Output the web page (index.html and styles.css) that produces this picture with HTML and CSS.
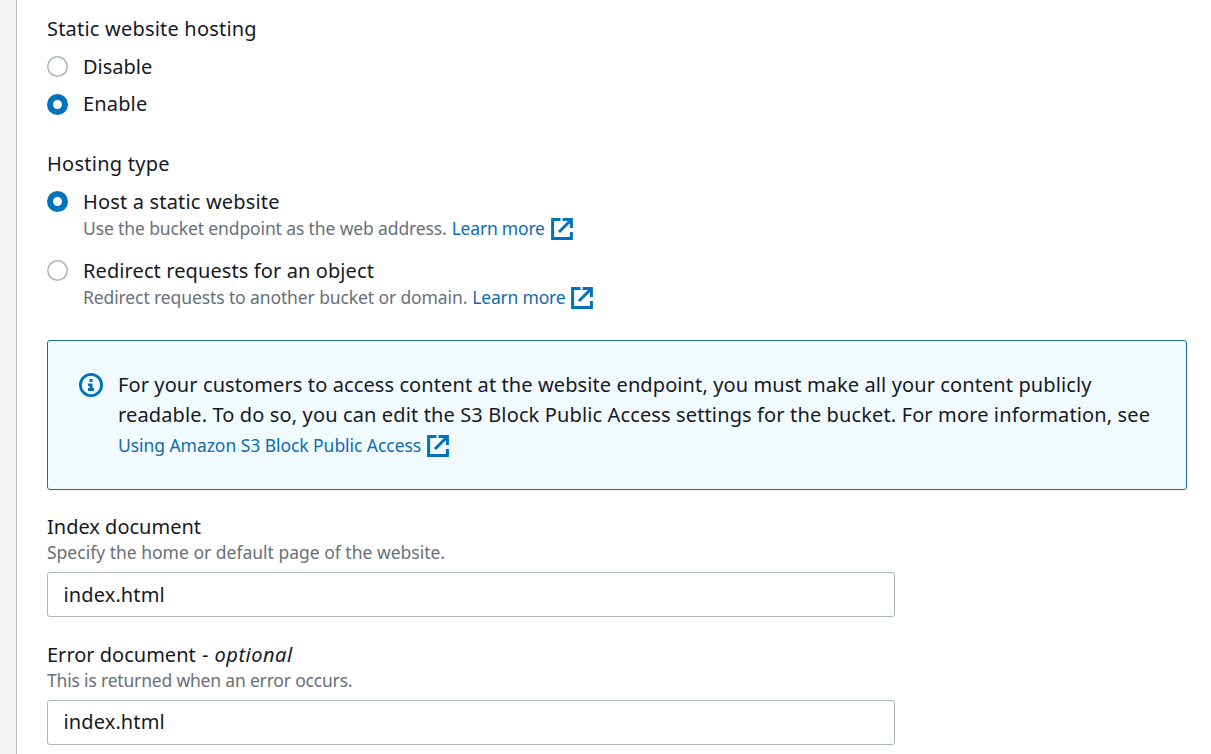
FILE: index.html
```
<!DOCTYPE html>
<html lang="en">
<head>
<meta charset="utf-8">
<title>Static website hosting</title>
<link rel="stylesheet" href="styles.css">
</head>
<body>
<svg class="sprite" width="0" height="0" aria-hidden="true">
  <symbol id="external" viewBox="0 0 22 22">
    <path d="M9.5 1.6H1.6v18.8h18.8V14M11.5 1.6h8.9V10M20 2 8 14" fill="none" stroke="currentColor" stroke-width="3"/>
  </symbol>
</svg>
<main class="panel">
  <section class="group">
    <h2 class="label"><span class="t1">Static website hosting</span></h2>
    <div class="option"><span class="radio raised"></span><span class="t2">Disable</span></div>
    <div class="option enable"><span class="radio checked"></span><span class="t3">Enable</span></div>
  </section>
  <section class="group hosting">
    <h2 class="label"><span class="t4">Hosting type</span></h2>
    <div class="option"><span class="radio checked raised"></span><span class="t5">Host a static website</span></div>
    <p class="hint indented"><span class="t6">Use the bucket endpoint as the web address.</span> <a class="link"><span class="t7">Learn more</span><svg class="external"><use href="#external"/></svg></a></p>
    <div class="option redirect"><span class="radio raised"></span><span class="t8">Redirect requests for an object</span></div>
    <p class="hint indented"><span class="t9">Redirect requests to another bucket or domain.</span> <a class="link"><span class="t7">Learn more</span><svg class="external"><use href="#external"/></svg></a></p>
  </section>
  <aside class="alert">
    <svg class="info" viewBox="0 0 24 24"><circle cx="12" cy="12" r="10.6" fill="none" stroke="currentColor" stroke-width="2.8"/><path d="M10.5 6h3v3h-3zM9 10.5h4.5V15H15v3H9v-3h1.5v-2H9z" fill="currentColor"/></svg>
    <div class="message">
      <div class="t10">For your customers to access content at the website endpoint, you must make all your content publicly</div>
      <div class="t11">readable. To do so, you can edit the S3 Block Public Access settings for the bucket. For more information, see</div>
      <a class="link"><span class="t12">Using Amazon S3 Block Public Access</span><svg class="external"><use href="#external"/></svg></a>
    </div>
  </aside>
  <section class="field">
    <label class="label" for="index-doc">Index document</label>
    <p class="hint"><span class="t14">Specify the home or default page of the website.</span></p>
    <input class="input" id="index-doc" value="index.html">
  </section>
  <section class="field second">
    <label class="label" for="error-doc">Error document <span class="optional">- <i>optional</i></span></label>
    <p class="hint"><span class="t16">This is returned when an error occurs.</span></p>
    <input class="input lifted" id="error-doc" value="index.html">
  </section>
</main>
</body>
</html>
```
FILE: styles.css
```
* { box-sizing: border-box; }
body {
  margin: 0;
  height: 754px;
  overflow: hidden;
  padding-left: 16px;
  background: #f2f2f2;
  color: #16191f;
  font: 20px/30px "Noto Sans", "Open Sans", sans-serif;
}
.sprite { position: absolute; }
.panel {
  height: 754px;
  padding: 14px 24px 0 30px;
  border-left: 1px solid #b9c0c1;
  background: #fff;
  white-space: nowrap;
}
.label { display: block; margin: 0; font-size: 20px; font-weight: 400; line-height: 30px; }
.option { display: flex; align-items: center; gap: 15px; height: 30px; margin-top: 8px; }
.enable { margin-top: 7px; }
.hosting { margin-top: 30px; }
.redirect { margin-top: 15px; }
.radio { width: 21px; height: 21px; border: 1.5px solid #aab7b8; border-radius: 50%; background: #fff; }
.radio:not(.checked) { border: 0; box-shadow: inset 0 0 0 1.5px #aab7b8; }
.checked { border: 6px solid #0073bb; }
.raised { margin-bottom: 2px; }
.hint { display: flex; align-items: center; gap: 5px; height: 24px; margin: 0; color: #687078; font-size: 17.5px; line-height: 24px; }
.hint span, .link span { padding-bottom: 2px; }
.indented { padding-left: 36px; }
.link { display: inline-flex; align-items: center; gap: 6px; color: #0f6cb0; font-size: 17.5px; }
.external { width: 22px; height: 22px; color: #0073bb; }
.alert {
  display: flex;
  gap: 15px;
  height: 150px;
  margin-top: 30px;
  padding: 29px 31px;
  border: 1px solid #1a6e9f;
  border-radius: 3px;
  background: #f1faff;
}
.info { width: 24px; height: 24px; margin-top: 3px; color: #0073bb; }
.message .link { display: flex; height: 32px; }
.field { margin-top: 22px; }
.second { margin-top: 23px; }
.field .hint { margin-top: -1px; }
.input {
  display: block;
  width: 848px;
  height: 45px;
  margin-top: 7px;
  padding: 0 15.5px;
  border: 1px solid #aab7b8;
  border-radius: 3px;
  background: #fff;
  color: #16191f;
  font: 20px "Noto Sans", "Open Sans", sans-serif;
  letter-spacing: 0.12px;
}
.lifted { padding-bottom: 2px; }
.t1 { letter-spacing: 0.2px; }
.t3 { letter-spacing: 0.15px; }
.t4 { letter-spacing: 0.25px; }
.t5 { letter-spacing: 0.17px; }
.t6 { letter-spacing: -0.125px; }
.t7 { letter-spacing: -0.2px; }
.t8 { letter-spacing: 0.1px; }
.t9 { letter-spacing: -0.11px; }
.t10 { letter-spacing: 0.1px; }
.t11 { letter-spacing: 0.128px; }
.t12 { letter-spacing: -0.055px; }
.t16 { letter-spacing: -0.185px; }
.optional { margin-left: 1px; letter-spacing: 0.5px; }
```
